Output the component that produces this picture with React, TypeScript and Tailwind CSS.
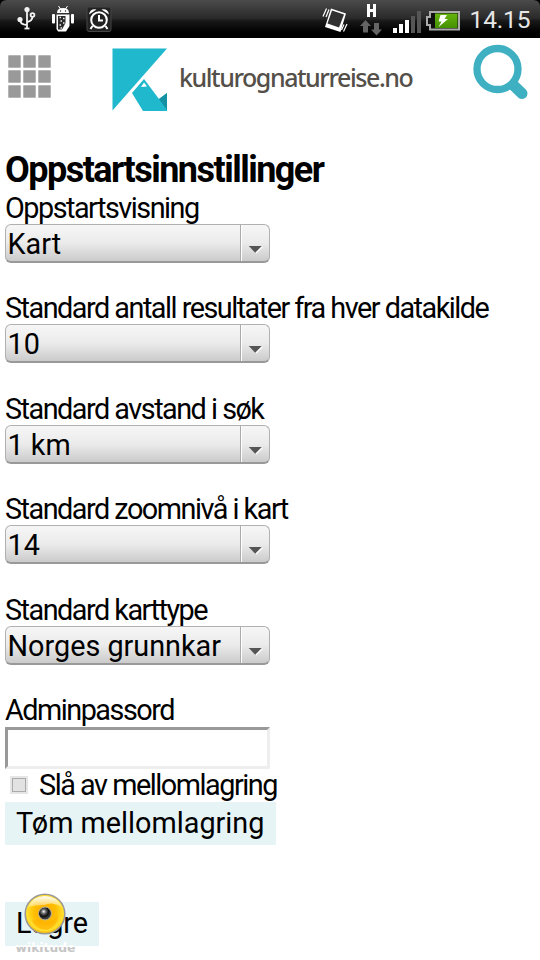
import React from "react";

function StatusBar() {
  return (
    <div className="h-[38px] w-full bg-black">
      <svg width="540" height="38" viewBox="0 0 540 38" className="block">
        <defs>
          <linearGradient id="bar" x1="0" y1="0" x2="0" y2="1">
            <stop offset="0" stopColor="#4b4b4b" />
            <stop offset=".48" stopColor="#2a2a2a" />
            <stop offset=".55" stopColor="#181818" />
            <stop offset=".85" stopColor="#000" />
          </linearGradient>
          <linearGradient id="bat" x1="0" y1="0" x2="0" y2="1">
            <stop offset="0" stopColor="#66b40e" />
            <stop offset="1" stopColor="#439000" />
          </linearGradient>
        </defs>
        <path d="M0 38V7Q0 0 7 0H533Q540 0 540 7V38Z" fill="url(#bar)" />
        {/* usb */}
        <g stroke="#f2f2f2" strokeWidth="1.8" fill="none">
          <path d="M27 9V28M20 20Q20 24.500 27 25M32.500 16Q32.500 21 27 22" />
          <circle cx="32.500" cy="15" r="1.900" />
          <path d="M24.500 28.500H29.500" />
        </g>
        <circle cx="27" cy="9.500" r="2.600" fill="#f2f2f2" />
        <circle cx="20" cy="19.500" r="2.600" fill="#f2f2f2" />
        {/* android robot */}
        <g fill="#fff">
          <path d="M57 13Q57 8 63 8Q69 8 69 13Z" />
          <path d="M58.500 6L60.500 9M67.500 6L65.500 9" stroke="#fff" />
          <rect x="52" y="14" width="3" height="9.500" rx="1" />
          <rect x="71" y="14" width="3" height="9.500" rx="1" />
          <path d="M56.500 14.500H69.500V26L66 31.500H58L56.500 29Z" />
        </g>
        <circle cx="60.500" cy="11" r=".7" fill="#222" />
        <circle cx="65.500" cy="11" r=".7" fill="#222" />
        <path d="M58 16H65.500V23L62 29.500H58Z" fill="#2b2b2b" />
        <path d="M59.500 17.500h1.500M63 18.500h1.500M60.500 21h1.500M63 23h1.500M59.500 25h1.500M60.500 28h1.500" stroke="#eee" strokeWidth="1.300" />
        {/* alarm clock */}
        <rect x="87" y="7" width="24" height="24.500" rx="2" fill="#222" stroke="#454545" />
        <g fill="none" stroke="#fff" strokeWidth="2">
          <circle cx="99" cy="20" r="7.800" />
          <path d="M99 15V20.500H103M92.500 26L90.500 29M105.500 26L107.500 29" />
        </g>
        <path d="M89 14.500Q90 8.500 96.500 9.500ZM109 14.500Q108 8.500 101.500 9.500Z" fill="#fff" />
        {/* vibrate */}
        <path d="M331 8.500L346 13.500L340.500 32L325 27Z" fill="#fff" />
        <path d="M332 10.500L344 14.500L339 27.500L327.500 23.500Z" fill="#303030" />
        <path d="M326.500 8.500L323 16.500M329 9.500L326 17M343.500 31.500L347 24M341.500 30L344 24.500" stroke="#fff" strokeWidth="1.200" />
        {/* network */}
        <path d="M367 4H370V9H373V4H376V17H373V12H370V17H367Z" fill="#fff" />
        <path d="M365.500 20L371 26H368V32.500H363V26H360ZM376.500 35.500L371 29.500H374V23H379V29.500H382Z" fill="#646464" />
        <path d="M393 28h4v5h-4zM399 24h4v9h-4zM405 20h4v13h-4z" fill="#fff" />
        <path d="M411 16h4v17h-4zM417 11h4v22h-4z" fill="#555" />
        {/* battery */}
        <path d="M430 12H459V29.500H430V25H427V17H430Z" fill="#101010" stroke="#aaa" strokeWidth="2" />
        <rect x="435" y="13.500" width="22.500" height="14.500" fill="url(#bat)" />
        <path d="M440.500 15H447L444.500 19H448L438.500 27L441.500 21.500H438.500Z" fill="#fff" />
        <text x="469.500" y="27.800" fill="#e6e6e6" fontFamily="Roboto, sans-serif" fontSize="24.500" textLength="61">14.15</text>
      </svg>
    </div>
  );
}

function Header() {
  return (
    <header className="flex h-[106px] items-start">
      <div className="ml-[8px] mt-[17px] grid grid-cols-3 gap-[2px]">
        {Array.from({ length: 9 }, (_, i) => (
          <span key={i} className="size-[13px] rounded-[1px] border border-[#b5b5b5] bg-[#999]" />
        ))}
      </div>
      <svg width="57" height="64" viewBox="0 0 57 64" className="ml-[61px] mt-[10px] shrink-0">
        <path d="M.500 .500H55L.500 62.500Z" fill="#1fb8cc" />
        <path d="M32 31L47 51L55 45V63H31L20 45Z" fill="#1fb8cc" />
        <path d="M47 51L55 45V62Z" fill="#1492a3" />
        <path d="M32 34.500L35 38.500L29 39Z" fill="#fff" />
      </svg>
      <span className="ml-[10px] mt-[22px] w-[240px] whitespace-nowrap font-['Noto_Sans',sans-serif] text-[25px] font-medium leading-[34px] tracking-[-1.45px] text-[#545049]">
        kulturognaturreise.no
      </span>
      <svg width="57" height="57" viewBox="0 0 57 57" className="ml-[53px] mt-[6px] shrink-0">
        <path d="M37 37L50 49.500" stroke="#3eb0c2" strokeWidth="11" strokeLinecap="round" />
        <circle cx="25.500" cy="25" r="20.500" fill="#fff" stroke="#3eb0c2" strokeWidth="7.300" />
      </svg>
    </header>
  );
}

function Select({ label, value }: { label: string; value: string }) {
  return (
    <div className="h-[100.4px]">
      <label className="block h-[33px] whitespace-nowrap text-[28.8px] leading-[34px] tracking-[-1.5px]">{label}</label>
      <div className="flex h-[39px] w-[265px] overflow-hidden rounded-[6px] border border-b-2 border-[#b0b0b0] border-b-[#999] bg-linear-to-b from-[#f6f6f6] via-[#ebebeb] to-[#cbcbcb]">
        <span className="w-[235px] shrink-0 overflow-hidden whitespace-nowrap border-r border-[#aaa] pl-[1.500px] text-[28.8px] leading-[38px]">{value}</span>
        <svg width="28" height="36" viewBox="0 0 28 36" className="shrink-0 border-l border-white">
          <path d="M8 22H22L15 29Z" fill="#fff" />
          <path d="M7 21H20.500L13.700 28Z" fill="#555" />
        </svg>
      </div>
    </div>
  );
}

function Wikitude() {
  return (
    <svg width="70" height="66" viewBox="0 0 70 66" className="absolute left-[5px] top-[-10px]">
      <defs>
        <radialGradient id="gold" cx=".5" cy=".45" r=".55">
          <stop offset="0" stopColor="#ffa800" />
          <stop offset=".5" stopColor="#ffbe00" />
          <stop offset=".85" stopColor="#ffe030" />
          <stop offset="1" stopColor="#f0a800" />
        </radialGradient>
        <linearGradient id="shine" x1="0" y1="0" x2="0" y2="1">
          <stop offset="0" stopColor="#fff" stopOpacity=".95" />
          <stop offset="1" stopColor="#fff" stopOpacity=".3" />
        </linearGradient>
        <radialGradient id="pupil" cx=".4" cy=".35" r=".6">
          <stop offset="0" stopColor="#fff" />
          <stop offset=".25" stopColor="#777" />
          <stop offset=".6" stopColor="#111" />
          <stop offset="1" stopColor="#444" />
        </radialGradient>
      </defs>
      <circle cx="35" cy="22" r="19.800" fill="url(#gold)" stroke="#999" strokeWidth="1.500" />
      <path d="M18 15Q23 4 35 4Q47 4 52 15Q43 9 34 13Q25 13 18 15Z" fill="url(#shine)" />
      <path d="M22 29Q28 25 34 30Q42 31 48 23Q48 34 37 38Q27 38 22 29Z" fill="#ffac00" opacity=".55" />
      <circle cx="35" cy="21.500" r="6.500" fill="url(#pupil)" stroke="#bcb49a" />
      <text x="5.500" y="60" fill="#fff" fontFamily="'DejaVu Sans', sans-serif" fontWeight="700" fontSize="12" textLength="60" lengthAdjust="spacingAndGlyphs">wikitude</text>
      <svg x="0" y="55" width="70" height="7">
        <text x="5.500" y="5" fill="#c5c5c5" fontFamily="'DejaVu Sans', sans-serif" fontWeight="700" fontSize="12" textLength="60" lengthAdjust="spacingAndGlyphs">wikitude</text>
      </svg>
    </svg>
  );
}

export default function App() {
  return (
    <div className="h-[960px] w-[540px] overflow-hidden bg-white font-[Roboto,sans-serif] text-black">
      <StatusBar />
      <Header />
      <main className="pl-[5px]">
        <h1 className="h-[47px] whitespace-nowrap pt-px text-[36px] font-bold leading-[50px] tracking-[-1.53px]">Oppstartsinnstillinger</h1>
        <Select label="Oppstartsvisning" value="Kart" />
        <Select label="Standard antall resultater fra hver datakilde" value="10" />
        <Select label="Standard avstand i søk" value="1 km" />
        <Select label="Standard zoomnivå i kart" value="14" />
        <Select label="Standard karttype" value="Norges grunnkar" />
        <label className="block h-[34px] text-[28.8px] leading-[34px] tracking-[-1.5px]">Adminpassord</label>
        <div className="h-[42px] w-[265px] border-[3px] border-b-[#eee] border-l-[#999] border-r-[#eee] border-t-[#999] bg-white" />
        <div className="flex h-[33px] items-center">
          <span className="mb-px ml-[5px] size-[18px] border-2 border-[#e6e6e6] bg-[#aaa] p-px">
            <span className="block size-full bg-[#e2e2e2]" />
          </span>
          <span className="ml-[11px] whitespace-nowrap text-[28.8px] leading-[33px] tracking-[-1.47px]">Slå av mellomlagring</span>
        </div>
        <button className="block h-[43px] w-[271px] whitespace-nowrap bg-[#e6f4f5] pl-[11px] text-left text-[28.8px] leading-[41px]">Tøm mellomlagring</button>
        <div className="relative mt-[57px]">
          <button className="block h-[44px] w-[94px] bg-[#e6f4f5] pb-px pl-[11px] text-left text-[28.8px] leading-[42px]">Lagre</button>
          <Wikitude />
        </div>
      </main>
    </div>
  );
}
